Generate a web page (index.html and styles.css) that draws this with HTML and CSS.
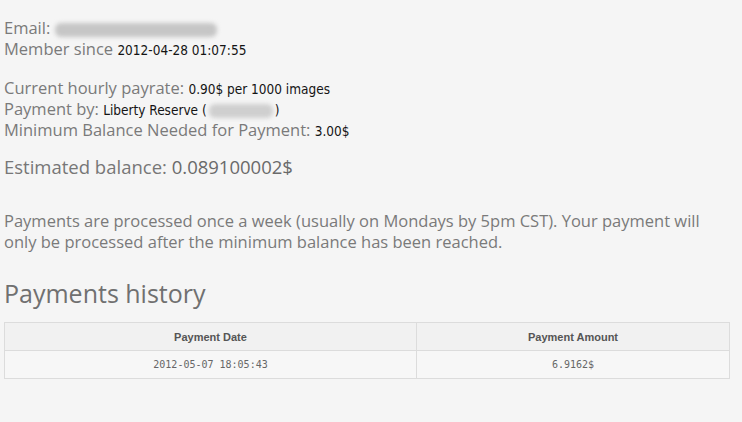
FILE: index.html
```html
<!DOCTYPE html>
<html>
<head>
<meta charset="utf-8">
<link rel="stylesheet" href="styles.css">
</head>
<body>
<div class="page">
  <div class="block">
    <div class="line"><span class="label">Email:</span> <span class="blur blur-email"></span></div>
    <div class="line"><span class="label">Member since</span> <span class="val">2012-04-28 01:07:55</span></div>
  </div>
  <div class="block block2">
    <div class="line"><span class="label">Current hourly payrate:</span> <span class="val">0.90$ per 1000 images</span></div>
    <div class="line"><span class="label">Payment by:</span> <span class="val">Liberty Reserve (<span class="blur blur-id"></span>)</span></div>
    <div class="line"><span class="label">Minimum Balance Needed for Payment:</span> <span class="val">3.00$</span></div>
  </div>
  <div class="balance">Estimated balance: <span class="bal-val">0.089100002$</span></div>
  <p class="note">Payments are processed once a week (usually on Mondays by 5pm CST). Your payment will only be processed after the minimum balance has been reached.</p>
  <h2 class="heading">Payments history</h2>
  <table class="history">
    <colgroup><col class="c1"><col class="c2"></colgroup>
    <thead>
      <tr><th>Payment Date</th><th>Payment Amount</th></tr>
    </thead>
    <tbody>
      <tr><td>2012-05-07 18:05:43</td><td>6.9162$</td></tr>
    </tbody>
  </table>
</div>
</body>
</html>
```
FILE: styles.css
```css
html, body {
  margin: 0;
  padding: 0;
  background: #f5f5f5;
}
body {
  font-family: "Open Sans", "PT Sans", sans-serif;
  color: #777;
}
.page {
  width: 725px;
  padding: 17px 0 0 4px;
}
.block {
  font-size: 16.5px;
  line-height: 21px;
}
.line {
  height: 21px;
  white-space: nowrap;
}
.block2 {
  margin-top: 18px;
}
.label {
  color: #7a7a7a;
}
.val {
  font-family: "DejaVu Sans Condensed", "Liberation Sans", sans-serif;
  font-size: 13.5px;
  line-height: 1;
  color: #141414;
}
.blur {
  display: inline-block;
  vertical-align: middle;
  height: 14px;
  background: #c6c6c6;
  border-radius: 6px;
  filter: blur(2px);
}
.blur-email {
  width: 162px;
}
.blur-id {
  width: 64px;
  margin: 0 2px;
  background: #cfcfcf;
}
.balance {
  margin-top: 15px;
  font-size: 18.5px;
  line-height: 24px;
  color: #777;
}
.bal-val {
  color: #6a6a6a;
}
.note {
  margin: 31px 0 0;
  font-size: 16.5px;
  line-height: 21px;
  color: #7a7a7a;
}
.heading {
  margin: 24px 0 0;
  font-size: 25px;
  line-height: 34px;
  font-weight: normal;
  color: #707070;
}
.history {
  margin-top: 12px;
  width: 725px;
  border-collapse: collapse;
  table-layout: fixed;
}
.c1 { width: 412px; }
.c2 { width: 313px; }
.history th, .history td {
  border: 1px solid #dcdcdc;
  height: 27px;
  padding: 0;
  text-align: center;
  vertical-align: middle;
}
.history th {
  font-family: "Liberation Sans", Arial, sans-serif;
  font-size: 11px;
  font-weight: bold;
  color: #555;
  background: #f1f1f1;
}
.history td {
  font-family: "DejaVu Sans Mono", "Liberation Mono", monospace;
  font-size: 10px;
  color: #666;
  background: #f7f7f7;
}
```
